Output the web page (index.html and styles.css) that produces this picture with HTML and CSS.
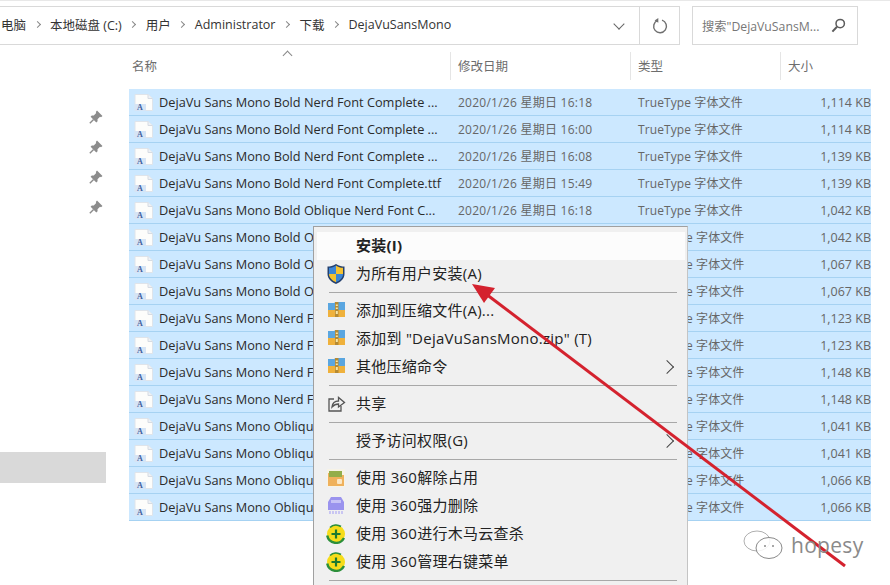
FILE: index.html
```html
<!DOCTYPE html>
<html lang="en">

<head>
    <meta charset="UTF-8">
    <title>DejaVuSansMono</title>
    <link rel="stylesheet" href="styles.css">
</head>

<body>
    <svg class="defs" width="0" height="0">
        <symbol id="font-file" viewBox="0 0 19 17">
            <path d="M1 .5H14L18.500 4.500V16.500H1Z" fill="#fdfdfb" stroke="#dfe4ea" />
            <path d="M14 .5V4.500H18.500" fill="#eef1f5" stroke="#d5dbe3" />
            <rect x="1" y="10" width="11" height="7" fill="#d6e4f5" />
            <text x="3" y="16" class="file-letter">A</text>
        </symbol>
        <symbol id="pin" viewBox="0 0 14 14">
            <path d="M8 .5 13.500 6 12 7.200 11 6.800 8.500 9.200 8.600 11.200 7.300 12.400 1.600 6.700 2.800 5.400 4.800 5.500 7.200 3 6.800 2Z" fill="#8c8c8c" />
            <path d="M4.600 9.400 .8 13.200" stroke="#8c8c8c" stroke-width="1.400" />
        </symbol>
        <symbol id="archive" viewBox="0 0 17 15">
            <path d="M0 1H6L7.500 0H17V15H0Z" fill="#5aa6e0" />
            <rect y="8" width="17" height="7" fill="#efb13c" />
            <rect x="7" width="3.500" height="15" fill="#b58a34" />
            <rect x="7.800" y="2.500" width="2" height="1.500" fill="#f5e6a8" />
            <rect x="7.800" y="5.500" width="2" height="1.500" fill="#f5e6a8" />
            <rect x="7.800" y="9" width="2" height="3" fill="#f5e6a8" />
        </symbol>
        <symbol id="plus360" viewBox="0 0 20 20">
            <circle cx="10" cy="10" r="9" fill="#f6dc1a" />
            <path d="M4 3.500A9 9 0 0 1 15 2.500" fill="none" stroke="#2c8f3a" stroke-width="1.600" />
            <path d="M1.200 11.500A9 9 0 0 0 18 14" fill="none" stroke="#2c8f3a" stroke-width="2.400" />
            <path d="M10 5.500V14.500M5.500 10H14.500" stroke="#1d7a30" stroke-width="2.200" />
        </symbol>
    </svg>

    <header class="toolbar">
        <div class="address">
            <nav class="crumbs">
                <span>电脑</span><i class="sep"></i>
                <span>本地磁盘 (C:)</span><i class="sep"></i>
                <span>用户</span><i class="sep"></i>
                <span>Administrator</span><i class="sep"></i>
                <span>下载</span><i class="sep"></i>
                <span>DejaVuSansMono</span>
            </nav>
            <i class="dropdown"></i>
            <div class="refresh">
                <svg width="16" height="16" viewBox="0 0 16 16">
                    <path d="M5.600 2.400A6.400 6.400 0 1 0 10 2.200" fill="none" stroke="#6f6f6f" stroke-width="1.400" />
                    <path d="M6.300 0 6.300 4.800 2.600 2.600Z" fill="#6f6f6f" />
                </svg>
            </div>
        </div>
        <div class="search">
            <span>搜索"DejaVuSansM...</span>
            <svg width="15" height="15" viewBox="0 0 15 15">
                <circle cx="9.200" cy="5.600" r="4.200" fill="none" stroke="#5c5c5c" stroke-width="1.500" />
                <path d="M6 8.800 1.400 13.600" stroke="#5c5c5c" stroke-width="2" />
            </svg>
        </div>
    </header>

    <div class="columns">
        <div class="col col-name">名称<i class="sort"></i></div>
        <div class="col col-date">修改日期</div>
        <div class="col col-type">类型</div>
        <div class="col col-size">大小</div>
    </div>

    <main class="explorer">
        <aside class="side">
            <div class="pins">
                <svg class="pin"><use href="#pin" /></svg>
                <svg class="pin"><use href="#pin" /></svg>
                <svg class="pin"><use href="#pin" /></svg>
                <svg class="pin"><use href="#pin" /></svg>
            </div>
            <div class="side-selected"></div>
        </aside>

        <ul class="files">
            <li><svg class="file-icon"><use href="#font-file" /></svg><span class="name">DejaVu Sans Mono Bold Nerd Font Complete ...</span><span class="date">2020/1/26 星期日 16:18</span><span class="type">TrueType 字体文件</span><span class="size">1,114 KB</span></li>
            <li><svg class="file-icon"><use href="#font-file" /></svg><span class="name">DejaVu Sans Mono Bold Nerd Font Complete ...</span><span class="date">2020/1/26 星期日 16:00</span><span class="type">TrueType 字体文件</span><span class="size">1,114 KB</span></li>
            <li><svg class="file-icon"><use href="#font-file" /></svg><span class="name">DejaVu Sans Mono Bold Nerd Font Complete ...</span><span class="date">2020/1/26 星期日 16:08</span><span class="type">TrueType 字体文件</span><span class="size">1,139 KB</span></li>
            <li><svg class="file-icon"><use href="#font-file" /></svg><span class="name">DejaVu Sans Mono Bold Nerd Font Complete.ttf</span><span class="date">2020/1/26 星期日 15:49</span><span class="type">TrueType 字体文件</span><span class="size">1,139 KB</span></li>
            <li><svg class="file-icon"><use href="#font-file" /></svg><span class="name">DejaVu Sans Mono Bold Oblique Nerd Font C...</span><span class="date">2020/1/26 星期日 16:18</span><span class="type">TrueType 字体文件</span><span class="size">1,042 KB</span></li>
            <!-- these rows sit under the context menu, only the visible ends are kept -->
            <li class="under"><svg class="file-icon"><use href="#font-file" /></svg><span class="name">DejaVu Sans Mono Bold O</span><span class="date"></span><span class="type">e 字体文件</span><span class="size">1,042 KB</span></li>
            <li class="under"><svg class="file-icon"><use href="#font-file" /></svg><span class="name">DejaVu Sans Mono Bold O</span><span class="date"></span><span class="type">e 字体文件</span><span class="size">1,067 KB</span></li>
            <li class="under"><svg class="file-icon"><use href="#font-file" /></svg><span class="name">DejaVu Sans Mono Bold O</span><span class="date"></span><span class="type">e 字体文件</span><span class="size">1,067 KB</span></li>
            <li class="under"><svg class="file-icon"><use href="#font-file" /></svg><span class="name">DejaVu Sans Mono Nerd F</span><span class="date"></span><span class="type">e 字体文件</span><span class="size">1,123 KB</span></li>
            <li class="under"><svg class="file-icon"><use href="#font-file" /></svg><span class="name">DejaVu Sans Mono Nerd F</span><span class="date"></span><span class="type">e 字体文件</span><span class="size">1,123 KB</span></li>
            <li class="under"><svg class="file-icon"><use href="#font-file" /></svg><span class="name">DejaVu Sans Mono Nerd F</span><span class="date"></span><span class="type">e 字体文件</span><span class="size">1,148 KB</span></li>
            <li class="under"><svg class="file-icon"><use href="#font-file" /></svg><span class="name">DejaVu Sans Mono Nerd F</span><span class="date"></span><span class="type">e 字体文件</span><span class="size">1,148 KB</span></li>
            <li class="under"><svg class="file-icon"><use href="#font-file" /></svg><span class="name">DejaVu Sans Mono Obliqu</span><span class="date"></span><span class="type">e 字体文件</span><span class="size">1,041 KB</span></li>
            <li class="under"><svg class="file-icon"><use href="#font-file" /></svg><span class="name">DejaVu Sans Mono Obliqu</span><span class="date"></span><span class="type">e 字体文件</span><span class="size">1,041 KB</span></li>
            <li class="under"><svg class="file-icon"><use href="#font-file" /></svg><span class="name">DejaVu Sans Mono Obliqu</span><span class="date"></span><span class="type">e 字体文件</span><span class="size">1,066 KB</span></li>
            <li class="under"><svg class="file-icon"><use href="#font-file" /></svg><span class="name">DejaVu Sans Mono Obliqu</span><span class="date"></span><span class="type">e 字体文件</span><span class="size">1,066 KB</span></li>
        </ul>
    </main>

    <div class="menu">
        <div class="item strong"><span class="label">安装(I)</span></div>
        <div class="item">
            <svg class="icon icon-shield" viewBox="0 0 20 22">
                <path d="M10 1C7 3 4 3.500 1.500 3.500V11C1.500 16 6 19.500 10 21C14 19.500 18.500 16 18.500 11V3.500C16 3.500 13 3 10 1Z" fill="#24406e" />
                <path d="M10 2.500V11H3V4.800C5.500 4.800 8 4 10 2.500Z" fill="#3c86d6" />
                <path d="M10 2.500C12 4 14.500 4.800 17 4.800V11H10Z" fill="#f5c230" />
                <path d="M3 11H10V19.200C6.500 17.800 3 15 3 11Z" fill="#f5c230" />
                <path d="M10 11H17C17 15 13.500 17.800 10 19.200Z" fill="#3c86d6" />
            </svg>
            <span class="label">为所有用户安装(A)</span>
        </div>
        <hr>
        <div class="item"><svg class="icon icon-archive"><use href="#archive" /></svg><span class="label">添加到压缩文件(A)...</span></div>
        <div class="item"><svg class="icon icon-archive"><use href="#archive" /></svg><span class="label">添加到 "DejaVuSansMono.zip" (T)</span></div>
        <div class="item"><svg class="icon icon-archive"><use href="#archive" /></svg><span class="label">其他压缩命令</span><i class="more"></i></div>
        <hr>
        <div class="item">
            <svg class="icon" viewBox="0 0 20 20">
                <path d="M8 5H3V17H15V12" fill="none" stroke="#555" stroke-width="1.300" />
                <path d="M6 13C6.500 9 9 7 12.500 7V3.500L18.500 8.500L12.500 13V10C10 10 7.800 11 6 13Z" fill="none" stroke="#555" stroke-width="1.300" />
            </svg>
            <span class="label">共享</span>
        </div>
        <hr>
        <div class="item"><span class="label">授予访问权限(G)</span><i class="more"></i></div>
        <hr>
        <div class="item">
            <svg class="icon" viewBox="0 0 20 20">
                <rect x="1" y="1" width="18" height="18" fill="#f7f3e6" />
                <path d="M2 5H9L11 7H18V18H2Z" fill="#efb15c" />
                <path d="M3 3H16V9H3Z" fill="#93ad4a" />
                <rect x="11" y="11" width="5" height="5" rx="1" fill="#fbe7c6" />
            </svg>
            <span class="label">使用 360解除占用</span>
        </div>
        <div class="item">
            <svg class="icon" viewBox="0 0 20 20">
                <path d="M5 1H15L18 6V14H2V6Z" fill="#9a93ee" />
                <rect x="5" y="4" width="10" height="3" fill="#c6c2f6" />
                <path d="M4 15V18M7 15V18M10 15V18M13 15V18M16 15V18" stroke="#bcb8f2" stroke-width="1.500" />
            </svg>
            <span class="label">使用 360强力删除</span>
        </div>
        <div class="item"><svg class="icon"><use href="#plus360" /></svg><span class="label">使用 360进行木马云查杀</span></div>
        <div class="item"><svg class="icon"><use href="#plus360" /></svg><span class="label">使用 360管理右键菜单</span></div>
        <hr>
    </div>

    <svg class="arrow" width="890" height="585" viewBox="0 0 890 585">
        <path d="M845 566 486 294" stroke="#d4222e" stroke-width="3" fill="none" />
        <path d="M472 284 495 288 484 303Z" fill="#d4222e" />
    </svg>

    <div class="watermark">
        <svg width="40" height="30" viewBox="0 0 40 30">
            <ellipse cx="14" cy="11" rx="13" ry="10" fill="#fff" fill-opacity=".7" stroke="#b0b0b0" />
            <ellipse cx="26" cy="18" rx="13" ry="10.500" fill="#fff" fill-opacity=".85" stroke="#8a8a8a" />
            <circle cx="22" cy="16" r="1" fill="#8a8a8a" />
            <circle cx="30" cy="16" r="1" fill="#8a8a8a" />
        </svg>
        <span>hopesy</span>
    </div>
</body>

</html>
```
FILE: styles.css
```css
* {
    box-sizing: border-box;
}

html,
body {
    height: 100%;
}

body {
    margin: 0;
    overflow: hidden;
    position: relative;
    background-color: #fff;
    font-family: "Open Sans", "Noto Sans CJK SC", sans-serif;
    font-size: 12.5px;
    color: #3c3c3c;
}

.defs {
    position: absolute;
}

.file-letter {
    font-family: "Liberation Serif", serif;
    font-size: 8px;
    font-weight: bold;
    fill: #3f5f9f;
}

.toolbar {
    display: flex;
    gap: 12px;
    height: 45px;
    padding-top: 6px;
    background: linear-gradient(#e8e8e8 1px, #fff 1px);
}

.address {
    display: flex;
    align-items: center;
    width: 680px;
    height: 39px;
    border: 1px solid #d9d9d9;
    border-left: none;
}

.crumbs {
    display: flex;
    align-items: center;
    flex: 1;
    gap: 8.5px;
    padding: 0 0 3px 1px;
    color: #333;
    white-space: nowrap;
}

.sep {
    width: 5px;
    height: 5px;
    margin-right: 2px;
    border-top: 1px solid #888;
    border-right: 1px solid #888;
    transform: rotate(45deg);
}

.dropdown {
    width: 8px;
    height: 8px;
    margin: -4px 16px 0 0;
    border-right: 1.500px solid #666;
    border-bottom: 1.500px solid #666;
    transform: rotate(45deg);
}

.refresh {
    display: flex;
    align-items: center;
    justify-content: center;
    width: 40px;
    height: 100%;
    border-left: 1px solid #d9d9d9;
}

.search {
    display: flex;
    align-items: center;
    justify-content: space-between;
    width: 166px;
    height: 39px;
    padding: 0 11px 0 9px;
    border: 1px solid #d9d9d9;
    color: #777;
    font-size: 12.25px;
}

.columns {
    display: flex;
    height: 44px;
    padding-left: 132px;
    color: #6d6d6d;
}

.col {
    display: flex;
    align-items: center;
    position: relative;
    height: 28px;
    margin-top: 7px;
    padding-bottom: 2px;
    border-right: 1px solid #e5e5e5;
}

.col-name {
    width: 319px;
}

.col-date {
    width: 180px;
    padding-left: 7px;
}

.col-type {
    width: 150px;
    padding-left: 7px;
}

.col-size {
    padding-left: 7px;
    border-right: none;
}

.sort {
    position: absolute;
    left: 152px;
    top: 0;
    width: 7px;
    height: 7px;
    border-top: 1px solid #888;
    border-left: 1px solid #888;
    transform: rotate(45deg);
}

.explorer {
    display: flex;
}

.side {
    display: flex;
    flex-direction: column;
    width: 129px;
}

.pins {
    display: flex;
    flex-direction: column;
    align-items: flex-end;
    gap: 16px;
    height: 363px;
    padding: 21px 26px 0 0;
}

.pin {
    width: 14px;
    height: 14px;
}

.side-selected {
    width: 106px;
    height: 31px;
    background-color: #d9d9d9;
}

.files {
    width: 742px;
    margin: 0;
    padding: 0;
    list-style: none;
}

.files li {
    display: flex;
    align-items: center;
    height: 27px;
    padding-left: 5px;
    background-color: #cce8ff;
    border-bottom: 1px solid #a6d2f2;
    white-space: nowrap;
}

.file-icon {
    flex: none;
    width: 19px;
    height: 17px;
    margin-right: 6px;
}

.name {
    width: 299px;
    color: #2b2b2b;
    font-size: 12.75px;
}

.date {
    width: 180px;
    color: #666;
    font-size: 12px;
    letter-spacing: .25px;
}

.type {
    width: 150px;
    color: #666;
    font-size: 12px;
    letter-spacing: .1px;
}

.under .type {
    padding-left: 48px;
}

.size {
    width: 83px;
    text-align: right;
    color: #666;
}

.menu {
    position: absolute;
    left: 313px;
    top: 226px;
    width: 375px;
    height: 370px;
    padding: 5px 0 0 3px;
    background-color: #f0f0f0;
    border: 1px solid #a0a0a0;
    border-right-color: #c4c4c4;
    color: #222;
    font-size: 15px;
    letter-spacing: .25px;
}

.item {
    display: flex;
    align-items: center;
    position: relative;
    height: 28px;
    padding-left: 39px;
}

.label {
    padding-bottom: 3px;
}

.strong {
    margin-right: 2px;
    background-color: #fcfcfc;
    font-weight: bold;
}

.icon {
    position: absolute;
    left: 9px;
    top: 4px;
    width: 20px;
    height: 20px;
}

.icon-shield {
    top: 3px;
    height: 22px;
}

.icon-archive {
    left: 11px;
    top: 5px;
    width: 17px;
    height: 15px;
}

.more {
    position: absolute;
    right: 15px;
    top: 9px;
    width: 10px;
    height: 10px;
    border-top: 1px solid #444;
    border-right: 1px solid #444;
    transform: rotate(45deg);
}

.menu hr {
    height: 1px;
    margin: 4px 10px 4px 12px;
    border: none;
    background-color: #a8a8a8;
}

.arrow {
    position: absolute;
    left: 0;
    top: 0;
    pointer-events: none;
}

.watermark {
    position: absolute;
    left: 743px;
    top: 530px;
    display: flex;
    align-items: center;
    gap: 8px;
    color: #8a8a8a;
    font-size: 21px;
    letter-spacing: .3px;
}
```
